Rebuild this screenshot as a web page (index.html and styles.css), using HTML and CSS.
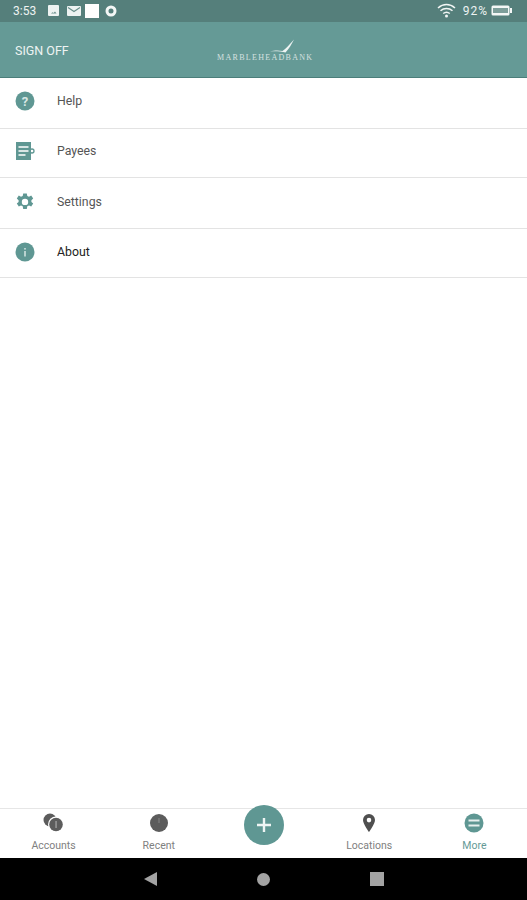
FILE: index.html
```html
<!DOCTYPE html>
<html lang="en">
<head>
  <meta charset="UTF-8">
  <meta name="viewport" content="width=device-width, initial-scale=1.0">
  <title>More</title>
  <link rel="stylesheet" href="styles.css">
</head>
<body>

<!-- status bar -->
<div class="status-bar">
  <span class="time">3:53</span>
  <svg class="st-icon" width="11" height="11" viewBox="0 0 11 11"><rect width="11" height="11" rx="1" fill="#eef3f2"/><path d="M3 8.500h5.500L7 6.500 5.500 8 4.500 7.200z" fill="#6a8f8b"/></svg>
  <svg class="st-icon" width="14" height="10" viewBox="0 0 14 10"><rect width="14" height="10" rx="1" fill="#eef3f2"/><path d="M1 1.500l6 4 6-4" fill="none" stroke="#6a8f8b" stroke-width="1.200"/></svg>
  <span class="st-square"></span>
  <svg class="st-icon" width="12" height="12" viewBox="0 0 12 12"><circle cx="6" cy="6" r="4" fill="none" stroke="#f4f7f6" stroke-width="3"/></svg>
  <span class="spacer"></span>
  <svg class="wifi" width="19" height="15" viewBox="0 0 19 15"><g fill="none" stroke="#f2f6f5" stroke-width="1.500"><path d="M1 5c5-4.600 12-4.600 17 0"/><path d="M3.500 7.800c3.500-3 8.500-3 12 0"/><path d="M6.200 10.500c2-1.600 4.600-1.600 6.600 0"/></g><circle cx="9.500" cy="13" r="1.500" fill="#f2f6f5"/></svg>
  <span class="pct">92%</span>
  <svg width="21" height="11" viewBox="0 0 21 11"><rect x="0.500" y="0.500" width="18" height="10" rx="1.500" fill="#f4f7f6"/><rect x="2" y="3" width="15" height="5" fill="#7d9e9a"/><rect x="19" y="3" width="2" height="5" fill="#f4f7f6"/></svg>
</div>

<!-- header -->
<header class="top-bar">
  <span class="sign-off">SIGN OFF</span>
  <div class="logo">
    <svg class="logo-bird" width="26" height="14" viewBox="0 0 26 14"><path d="M1 12.500c5-1.500 9-1.200 12.500-.5C17 9.500 20 6 25 .5c-2.500 5-5 9-8.500 13C13 12.800 7 12 1 12.500z" fill="#eef4f3"/></svg>
    <span class="logo-text">MARBLEHEADBANK</span>
  </div>
</header>

<!-- menu -->
<ul class="menu">
  <li class="menu-item">
    <svg class="menu-icon" width="20" height="20" viewBox="0 0 20 20"><circle cx="10" cy="10" r="9.500" fill="#5f9793"/><text x="10" y="14.500" class="icon-glyph">?</text></svg>
    <span class="menu-label muted">Help</span>
  </li>
  <li class="menu-item">
    <svg class="menu-icon" width="20" height="20" viewBox="0 0 20 20"><rect x="1" y="1" width="15" height="18" fill="#5f9793"/><circle cx="17" cy="10" r="2" fill="none" stroke="#5f9793" stroke-width="1.300"/><path d="M3.500 6h10M3.500 10h10M3.500 14h7" stroke="#fff" stroke-width="1.400"/></svg>
    <span class="menu-label muted">Payees</span>
  </li>
  <li class="menu-item">
    <svg class="menu-icon" width="20" height="20" viewBox="0 0 20 20"><path fill="#5f9793" fill-rule="evenodd" d="M8.200 1.500h3.600l.5 2.400 1.700.8 2.200-1.100 2 3-1.800 1.600v1.800l1.800 1.600-2 3-2.200-1.100-1.700.8-.5 2.700H8.200l-.5-2.700-1.700-.8-2.200 1.100-2-3 1.800-1.600V8.200L1.800 6.600l2-3L6 4.700l1.700-.8zM10 6.700a3.200 3.200 0 1 0 0 6.400 3.200 3.200 0 0 0 0-6.400z"/></svg>
    <span class="menu-label muted">Settings</span>
  </li>
  <li class="menu-item">
    <svg class="menu-icon" width="20" height="20" viewBox="0 0 20 20"><circle cx="10" cy="10" r="9.500" fill="#5f9793"/><rect x="9.200" y="9" width="1.600" height="5.500" fill="#cfe0de"/><rect x="9.200" y="6" width="1.600" height="1.600" fill="#cfe0de"/></svg>
    <span class="menu-label">About</span>
  </li>
</ul>

<!-- bottom tabs -->
<nav class="tab-bar">
  <div class="tab">
    <svg width="22" height="20" viewBox="0 0 22 20"><circle cx="7" cy="7" r="6.500" fill="#5c5c5c"/><circle cx="13" cy="11.500" r="8" fill="#fff"/><circle cx="13" cy="11.500" r="6.800" fill="#5c5c5c"/><rect x="12.300" y="8" width="1.500" height="7" fill="#999"/></svg>
    <span class="tab-label">Accounts</span>
  </div>
  <div class="tab">
    <svg width="20" height="20" viewBox="0 0 20 20"><circle cx="10" cy="10" r="9" fill="#5c5c5c"/><path d="M10 5v5" stroke="#777" stroke-width="1.500"/></svg>
    <span class="tab-label">Recent</span>
  </div>
  <div class="tab tab-add">
    <button class="add-btn"><svg width="16" height="16" viewBox="0 0 16 16"><path d="M8 1v14M1 8h14" stroke="#eef5f4" stroke-width="2.400"/></svg></button>
  </div>
  <div class="tab">
    <svg width="14" height="20" viewBox="0 0 14 20"><path fill="#4f4f4f" fill-rule="evenodd" d="M7 1a6 6 0 0 1 6 6C13 11 7 19 7 19S1 11 1 7a6 6 0 0 1 6-6zm0 3.800a2.300 2.300 0 1 0 0 4.600 2.300 2.300 0 0 0 0-4.600z"/></svg>
    <span class="tab-label">Locations</span>
  </div>
  <div class="tab">
    <svg width="20" height="20" viewBox="0 0 20 20"><circle cx="10" cy="10" r="9.500" fill="#5f9793"/><path d="M4.500 7.500h11M4.500 12.500h11" stroke="#e6efee" stroke-width="2"/></svg>
    <span class="tab-label active">More</span>
  </div>
</nav>

<!-- android nav -->
<div class="nav-bar">
  <svg width="13" height="14" viewBox="0 0 13 14"><path d="M13 0v14L0 7z" fill="#a3a3a3"/></svg>
  <span class="nav-circle"></span>
  <span class="nav-square"></span>
</div>

</body>
</html>
```

FILE: styles.css
```css
* {
  box-sizing: border-box;
}

html, body {
  height: 100%;
}

body {
  margin: 0;
  display: flex;
  flex-direction: column;
  height: 900px;
  font-family: Roboto, 'Liberation Sans', sans-serif;
  background-color: #fff;
  overflow: hidden;
}

.status-bar {
  height: 22px;
  display: flex;
  align-items: center;
  padding: 0 15px 1px 13px;
  background-color: #557f7b;
  color: #eef3f2;
  font-size: 12px;
}

.time {
  margin-right: 12px;
}

.st-icon {
  margin-right: 8px;
}

.st-square {
  width: 14px;
  height: 14px;
  margin-right: 6px;
  margin-left: -4px;
  background-color: #fff;
}

.spacer {
  flex: 1;
}

.pct {
  margin: 0 3px 0 7px;
  letter-spacing: 1px;
}

.top-bar {
  height: 56px;
  display: flex;
  align-items: center;
  padding-left: 15px;
  background-color: #659a96;
  border-bottom: 1px solid #4b7e7a;
  color: #eef4f3;
  position: relative;
}

.sign-off {
  font-size: 12.500px;
  line-height: 14px;
  margin-top: 3px;
}

.logo {
  position: absolute;
  left: 217px;
  top: 17px;
  width: 97px;
}

.logo-bird {
  display: block;
  margin-left: 52px;
}

.logo-text {
  display: block;
  font-family: 'Liberation Serif', serif;
  font-size: 8px;
  line-height: 9px;
  letter-spacing: 1.300px;
  white-space: nowrap;
  opacity: 0.8;
}

.menu {
  margin: 0;
  padding: 0;
  list-style: none;
}

.menu-item {
  height: 50px;
  display: flex;
  align-items: center;
  gap: 22px;
  padding-left: 15px;
  padding-bottom: 5px;
  border-bottom: 1px solid #e3e3e3;
}

.menu-item:nth-child(1) {
  height: 51px;
}

.menu-item:nth-child(2) {
  height: 49px;
}

.menu-item:nth-child(3) {
  height: 51px;
  padding-bottom: 2px;
}

.menu-item:nth-child(4) {
  height: 49px;
  padding-bottom: 3px;
}

.menu-icon {
  flex: none;
}

.icon-glyph {
  font-family: Roboto, sans-serif;
  font-size: 13px;
  font-weight: 700;
  fill: #d9e7e5;
  text-anchor: middle;
}

.menu-label {
  font-size: 12.300px;
  color: #222;
}

.menu-label.muted {
  color: #555;
}

.tab-bar {
  margin-top: auto;
  height: 50px;
  display: grid;
  grid-template-columns: repeat(5, 1fr);
  padding: 4px 0 0 1px;
  border-top: 1px solid #e6e6e6;
  background-color: #fff;
}

.tab {
  display: flex;
  flex-direction: column;
  align-items: center;
  gap: 6px;
}

.tab svg {
  height: 20px;
}

.tab-label {
  font-size: 10.500px;
  line-height: 13px;
  color: #808080;
}

.tab-label.active {
  color: #659a96;
}

.tab-add {
  position: relative;
}

.add-btn {
  position: absolute;
  top: -8px;
  left: 50%;
  width: 40px;
  height: 40px;
  margin-left: -20px;
  padding: 0;
  display: flex;
  align-items: center;
  justify-content: center;
  border: none;
  border-radius: 50%;
  background-color: #5f9793;
}

.add-btn svg {
  height: 16px;
}

.nav-bar {
  height: 42px;
  display: flex;
  align-items: center;
  justify-content: center;
  gap: 100px;
  background-color: #000;
}

.nav-circle {
  width: 13px;
  height: 13px;
  border-radius: 50%;
  background-color: #a3a3a3;
}

.nav-square {
  width: 14px;
  height: 14px;
  background-color: #a3a3a3;
}
```
